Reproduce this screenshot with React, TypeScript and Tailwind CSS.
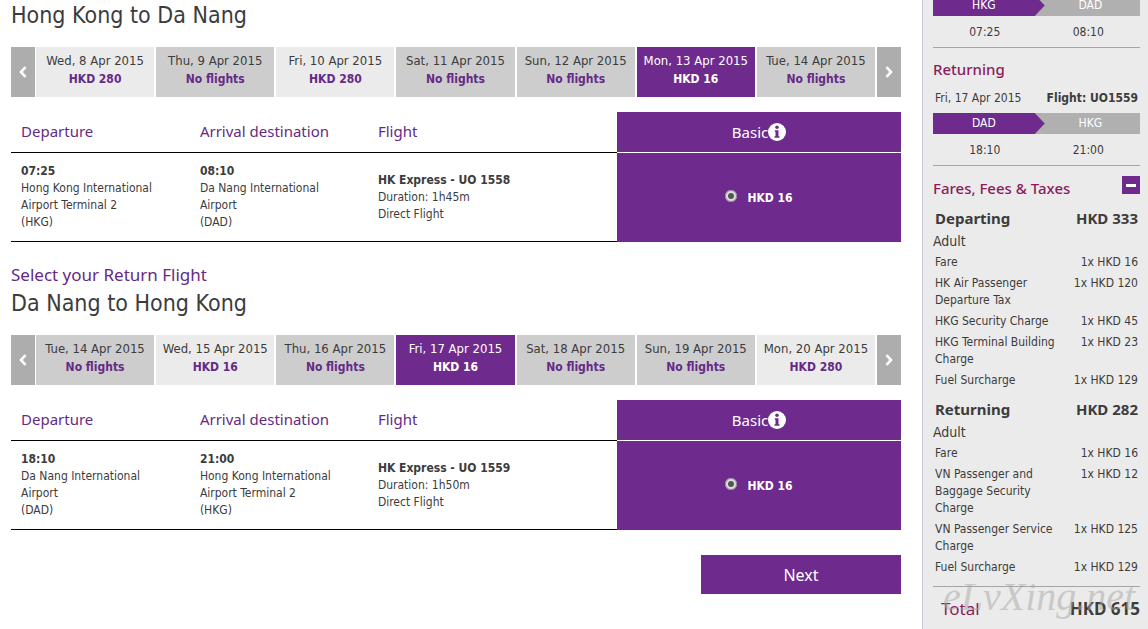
import React, { useState } from "react";

type Day = { date: string; price: string };
type Place = { time: string; airport: string; code: string };
type Leg = {
  id: string;
  title: string;
  days: Day[];
  active: number;
  from: Place;
  to: Place;
  flight: string;
  duration: string;
  fare: string;
};
type Fees = { title: string; total: string; rows: [string, string][] };

const HKG = "Hong Kong International Airport Terminal 2";
const DAD = "Da Nang International Airport";

const outbound: Leg = {
  id: "outbound",
  title: "Hong Kong to Da Nang",
  days: [
    { date: "Wed, 8 Apr 2015", price: "HKD 280" },
    { date: "Thu, 9 Apr 2015", price: "No flights" },
    { date: "Fri, 10 Apr 2015", price: "HKD 280" },
    { date: "Sat, 11 Apr 2015", price: "No flights" },
    { date: "Sun, 12 Apr 2015", price: "No flights" },
    { date: "Mon, 13 Apr 2015", price: "HKD 16" },
    { date: "Tue, 14 Apr 2015", price: "No flights" },
  ],
  active: 5,
  from: { time: "07:25", airport: HKG, code: "(HKG)" },
  to: { time: "08:10", airport: DAD, code: "(DAD)" },
  flight: "HK Express - UO 1558",
  duration: "Duration: 1h45m",
  fare: "HKD 16",
};

const inbound: Leg = {
  id: "inbound",
  title: "Da Nang to Hong Kong",
  days: [
    { date: "Tue, 14 Apr 2015", price: "No flights" },
    { date: "Wed, 15 Apr 2015", price: "HKD 16" },
    { date: "Thu, 16 Apr 2015", price: "No flights" },
    { date: "Fri, 17 Apr 2015", price: "HKD 16" },
    { date: "Sat, 18 Apr 2015", price: "No flights" },
    { date: "Sun, 19 Apr 2015", price: "No flights" },
    { date: "Mon, 20 Apr 2015", price: "HKD 280" },
  ],
  active: 3,
  from: { time: "18:10", airport: DAD, code: "(DAD)" },
  to: { time: "21:00", airport: HKG, code: "(HKG)" },
  flight: "HK Express - UO 1559",
  duration: "Duration: 1h50m",
  fare: "HKD 16",
};

const fees: Fees[] = [
  {
    title: "Departing",
    total: "HKD 333",
    rows: [
      ["Fare", "1x HKD 16"],
      ["HK Air Passenger Departure Tax", "1x HKD 120"],
      ["HKG Security Charge", "1x HKD 45"],
      ["HKG Terminal Building Charge", "1x HKD 23"],
      ["Fuel Surcharge", "1x HKD 129"],
    ],
  },
  {
    title: "Returning",
    total: "HKD 282",
    rows: [
      ["Fare", "1x HKD 16"],
      ["VN Passenger and Baggage Security Charge", "1x HKD 12"],
      ["VN Passenger Service Charge", "1x HKD 125"],
      ["Fuel Surcharge", "1x HKD 129"],
    ],
  },
];

const Chevron = ({ flip }: { flip?: boolean }) => (
  <svg width="8" height="12" viewBox="0 0 8 12" fill="none" stroke="#fff" strokeWidth="2.6">
    <path d={flip ? "M1.5 1.2 6 6 1.5 10.8" : "M6.5 1.2 2 6 6.5 10.8"} />
  </svg>
);

const InfoIcon = () => (
  <svg width="18" height="18" viewBox="0 0 18 18">
    <circle cx="9" cy="9" r="9" fill="#fff" />
    <circle cx="9" cy="4.2" r="1.8" fill="#6e2b8d" />
    <path d="M6.8 7.2h3.7v6h1v1.6h-5v-1.6h1V8.8h-.7z" fill="#6e2b8d" />
  </svg>
);

const DayStrip = ({ days, initial }: { days: Day[]; initial: number }) => {
  const [active, setActive] = useState(initial);
  const arrow = "flex w-6 shrink-0 items-center justify-center bg-[#adadad]";
  return (
    <div className="flex h-[50px]">
      <button type="button" aria-label="Previous week" className={arrow}><Chevron /></button>
      <div className="ml-px mr-0.5 grid flex-1 grid-cols-7 gap-0.5">
        {days.map((day, i) => {
          const on = i === active;
          const bg = on ? "bg-[#6e2b8d] text-white" : day.price === "No flights" ? "bg-[#cdcdcd]" : "bg-[#ebebeb]";
          return (
            <button key={day.date} type="button" onClick={() => setActive(i)} className={`${bg} whitespace-nowrap pb-1 leading-[18px]`}>
              <span className="block text-[13px]">{day.date}</span>
              <strong className={on ? "block" : "block text-[#652a85]"}>{day.price}</strong>
            </button>
          );
        })}
      </div>
      <button type="button" aria-label="Next week" className={arrow}><Chevron flip /></button>
    </div>
  );
};

const PlaceCell = ({ place }: { place: Place }) => (
  <td className="border-b border-black py-2.5 pl-2.5 pr-5 align-top">
    <strong className="block">{place.time}</strong>
    <span className="block">{place.airport}</span>
    <span className="block">{place.code}</span>
  </td>
);

const LegSection = ({ leg }: { leg: Leg }) => {
  const th = "h-[41px] border-b border-black pb-0.5 pl-2.5 text-left font-normal text-[#652a85]";
  return (
    <section>
      <h2 className="mb-[17px] text-[23px] leading-[30px]">{leg.title}</h2>
      <DayStrip days={leg.days} initial={leg.active} />
      <table className="mt-[15px] w-full table-fixed border-separate border-spacing-0">
        <thead className="font-['Noto_Sans'] text-[15px]">
          <tr>
            <th className={`${th} w-[20.1%]`}>Departure</th>
            <th className={`${th} w-[20%]`}>Arrival destination</th>
            <th className={`${th} w-[28%]`}>Flight</th>
            <th className="w-[31.9%] border-b border-white bg-[#6e2b8d] font-normal text-white">
              <span className="flex items-center justify-center">Basic <InfoIcon /></span>
            </th>
          </tr>
        </thead>
        <tbody className="leading-[17px]">
          <tr>
            <PlaceCell place={leg.from} />
            <PlaceCell place={leg.to} />
            <td className="border-b border-black pl-2.5">
              <strong className="block">{leg.flight}</strong>
              <span className="block">{leg.duration}</span>
              <span className="block">Direct Flight</span>
            </td>
            <td className="bg-[#6e2b8d] pt-0.5 text-white">
              <label className="flex items-start justify-center gap-2.5">
                <input
                  type="radio"
                  name={leg.id}
                  defaultChecked
                  className="size-3 appearance-none rounded-full border-[3px] border-[#dedede] bg-[#555] outline outline-[#8f8796] -outline-offset-1"
                />
                <strong>{leg.fare}</strong>
              </label>
            </td>
          </tr>
        </tbody>
      </table>
    </section>
  );
};

const Route = ({ from, to, depart, arrive }: { from: string; to: string; depart: string; arrive: string }) => (
  <div className="border-b border-[#a5a5a5] text-center">
    <div className="flex h-[21px] bg-[#b0b0b0] leading-[21px] text-white">
      <span className="w-[54%] bg-[#6e2b8d] pr-2.5 [clip-path:polygon(0_0,calc(100%-10px)_0,100%_50%,calc(100%-10px)_100%,0_100%)]">{from}</span>
      <span className="flex-1 pr-1">{to}</span>
    </div>
    <div className="flex h-[31px] leading-8">
      <span className="w-1/2">{depart}</span>
      <span className="w-1/2">{arrive}</span>
    </div>
  </div>
);

const Summary = () => {
  const [open, setOpen] = useState(true);
  return (
    <aside className="relative w-[226px] shrink-0 overflow-hidden border-l border-[#c9cbd6] bg-[#ebebeb] pl-2.5 pr-2">
      <div className="-mt-[5px]">
        <Route from="HKG" to="DAD" depart="07:25" arrive="08:10" />
      </div>
      <h3 className="mt-[9px] font-['Noto_Sans'] text-[15px] font-medium leading-6 text-[#8a1c5c]">Returning</h3>
      <p className="mb-1 mt-1.5 flex justify-between px-0.5 leading-[22px]">
        <span>Fri, 17 Apr 2015</span>
        <strong>Flight: UO1559</strong>
      </p>
      <Route from="DAD" to="HKG" depart="18:10" arrive="21:00" />
      <div className="mt-2.5 flex items-start justify-between">
        <h3 className="font-['Noto_Sans'] text-[15px] font-medium leading-6 text-[#8a1c5c]">Fares, Fees &amp; Taxes</h3>
        <button type="button" aria-label="Toggle fares" onClick={() => setOpen(!open)} className="flex size-[18px] items-center justify-center bg-[#6e2b8d]">
          <span className="h-[3px] w-2.5 bg-white" />
        </button>
      </div>
      {open && fees.map((group) => (
        <div key={group.title} className="mt-[7px]">
          <div className="flex justify-between px-0.5 font-['Noto_Sans'] text-[15px] font-bold leading-[22px]">
            <h4>{group.title}</h4>
            <span>{group.total}</span>
          </div>
          <p className="pt-px text-sm leading-[22px]">Adult</p>
          <table className="w-full">
            <tbody className="leading-[17px]">
              {group.rows.map(([name, value]) => (
                <tr key={name} className="align-top">
                  <td className="py-0.5 pl-0.5">{name}</td>
                  <td className="w-20 whitespace-nowrap py-0.5 pr-0.5 text-right">{value}</td>
                </tr>
              ))}
            </tbody>
          </table>
        </div>
      ))}
      <div className="mt-2 flex items-center justify-between border-t border-[#a5a5a5] pl-2 pt-2.5 font-['Noto_Sans'] text-[17px] leading-6">
        <span className="text-[#8a1c5c]">Total</span>
        <strong>HKD 615</strong>
      </div>
      <span className="pointer-events-none absolute bottom-2 left-5 font-['Liberation_Serif'] text-[40px] italic leading-[48px] text-[#a5a5a5]/50">eLvXing.net</span>
    </aside>
  );
};

const App: React.FC = () => {
  return (
    <div className="flex min-h-screen bg-white font-['DejaVu_Sans_Condensed','Noto_Sans',sans-serif] text-xs text-[#3c3c3c]">
      <main className="min-w-0 flex-1 pl-[11px] pr-[21px]">
        <LegSection leg={outbound} />
        <p className="mt-5 font-['Noto_Sans'] text-[17px] leading-[26px] text-[#652a85]">Select your Return Flight</p>
        <LegSection leg={inbound} />
        <button type="button" className="ml-auto mt-[25px] block h-[39px] w-[200px] bg-[#6e2b8d] font-['Noto_Sans'] text-base text-white">Next</button>
      </main>
      <Summary />
    </div>
  );
};

export default App;
